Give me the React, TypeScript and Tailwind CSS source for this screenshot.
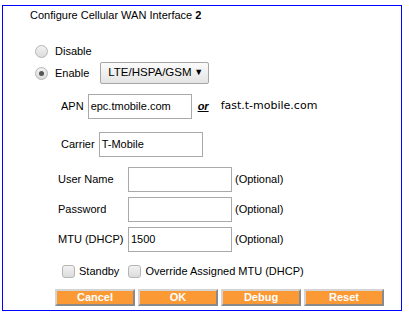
import React from "react";

const font = { fontFamily: '"Liberation Sans", Arial, sans-serif' };

function Radio({ checked }: { checked?: boolean }) {
  return (
    <span className="flex h-[13px] w-[13px] items-center justify-center rounded-full border border-[#b5b5b5] bg-gradient-to-b from-[#f2f2f2] to-[#dcdcdc]">
      {checked && <span className="h-[5px] w-[5px] rounded-full bg-[#555]" />}
    </span>
  );
}

function Checkbox() {
  return (
    <span className="block h-[13px] w-[13px] rounded-[3px] border border-[#b5b5b5] bg-gradient-to-b from-[#f2f2f2] to-[#dcdcdc]" />
  );
}

function Input({ value, w = "w-[104px]" }: { value?: string; w?: string }) {
  return (
    <div className={`flex h-[25px] ${w} items-center border border-[#a9a9a9] bg-white px-[2px] text-[11px] text-black`}>
      {value}
    </div>
  );
}

function Btn({ label }: { label: string }) {
  return (
    <div className="flex h-[17px] w-[80px] items-center justify-center border-2 border-t-[#d4d4d4] border-l-[#d4d4d4] border-b-[#8a8a8a] border-r-[#8a8a8a] bg-[#fb9a35] text-[11px] font-bold leading-none text-white">
      {label}
    </div>
  );
}

export default function App() {
  return (
    <div className="h-[318px] w-[409px] bg-white pl-[2px] pt-[5px] text-black" style={font}>
      <div className="flex h-[306px] w-[400px] flex-col border border-[#0000ff] text-[11px]">
        <div className="flex h-[18px] items-center pl-[27px]">
          Configure Cellular WAN Interface&nbsp;<b>2</b>
        </div>
        <div className="mt-[18px] flex h-[18px] items-center pl-[32px]">
          <Radio />
          <span className="ml-[7px]">Disable</span>
        </div>
        <div className="mt-[2px] flex h-[22px] items-center pl-[32px]">
          <Radio checked />
          <span className="ml-[7px]">Enable</span>
          <div className="ml-[11px] flex h-[22px] w-[109px] items-center justify-between rounded-[2px] border border-[#a6a6a6] bg-gradient-to-b from-[#fbfbfb] to-[#e4e4e4] pl-[7px] pr-[5px] text-[11.5px]">
            <span>LTE/HSPA/GSM</span>
            <span className="text-[9px]">▼</span>
          </div>
        </div>
        <div className="mt-[10px] flex h-[25px] items-center pl-[58px]">
          <span className="mr-[4px]">APN</span>
          <Input value="epc.tmobile.com" />
          <span className="ml-[6px] font-bold italic underline">or</span>
          <span className="ml-[12px]" style={{ fontFamily: '"DejaVu Sans", sans-serif' }}>
            fast.t-mobile.com
          </span>
        </div>
        <div className="mt-[13px] flex h-[25px] items-center pl-[58px]">
          <span className="mr-[4px]">Carrier</span>
          <Input value="T-Mobile" />
        </div>
        <div className="mt-[10px] flex h-[25px] items-center pl-[55px]">
          <span className="w-[70px]">User Name</span>
          <Input />
          <span className="ml-[3px]">(Optional)</span>
        </div>
        <div className="mt-[5px] flex h-[25px] items-center pl-[55px]">
          <span className="w-[70px]">Password</span>
          <Input />
          <span className="ml-[3px]">(Optional)</span>
        </div>
        <div className="mt-[5px] flex h-[25px] items-center pl-[55px]">
          <span className="w-[70px]">MTU (DHCP)</span>
          <Input value="1500" />
          <span className="ml-[3px]">(Optional)</span>
        </div>
        <div className="mt-[10px] flex h-[18px] items-center pl-[59px]">
          <Checkbox />
          <span className="ml-[4px]">Standby</span>
          <span className="ml-[9px]">
            <Checkbox />
          </span>
          <span className="ml-[4px]">Override Assigned MTU (DHCP)</span>
        </div>
        <div className="mt-[9px] flex gap-[3px] pl-[52px]">
          <Btn label="Cancel" />
          <Btn label="OK" />
          <Btn label="Debug" />
          <Btn label="Reset" />
        </div>
      </div>
    </div>
  );
}
